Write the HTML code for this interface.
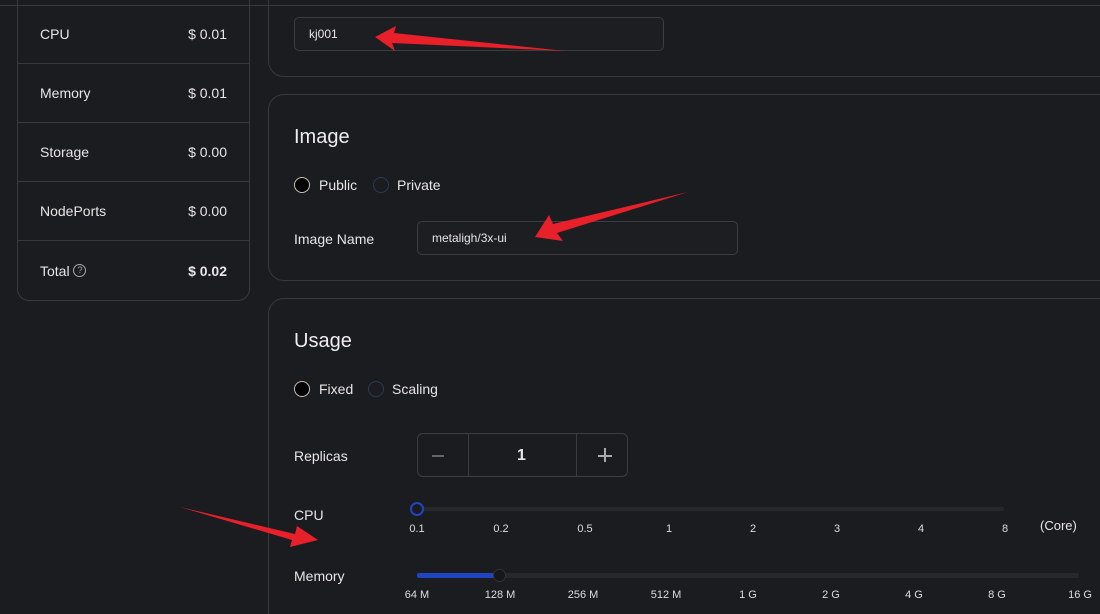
<!DOCTYPE html><html><head><style>
*{box-sizing:border-box;margin:0;padding:0}
html,body{width:1100px;height:614px;overflow:hidden}
body{background:#1b1c1f;font-family:"Liberation Sans",sans-serif;color:#e6e6e6;position:relative;font-size:14px}
.a{position:absolute}
.topline{left:0;top:5px;width:1100px;height:1px;background:#36393d}
.left{left:17px;top:-10px;width:233px;height:311px;border:1px solid #36393d;border-top:none;border-radius:0 0 12px 12px}
.row{position:absolute;left:0;width:231px;height:59px;border-bottom:1px solid #36393d;display:flex;justify-content:space-between;align-items:center;padding:0 22px;font-size:14px}
.card{left:268px;width:850px;border:1px solid #36393d;border-radius:16px}
.inp{border:1px solid #3a3d42;border-radius:5px;background:#1d1e21;font-size:12px;padding-left:14px;display:flex;align-items:center}
h2{position:absolute;font-size:20px;font-weight:normal;color:#eee}
.rad{position:absolute;width:16px;height:16px;border-radius:50%;border:1.5px solid #2b3a55}
.rad.on{border-color:#c9c1b3;background:#000}
.lbl{position:absolute;font-size:14px;white-space:nowrap}
.tick{position:absolute;font-size:11px;color:#ddd;transform:translateX(-50%);white-space:nowrap}
</style></head><body>
<div class="a topline"></div>
<div class="a left">
<div class="row" style="top:15px">CPU<span>$ 0.01</span></div>
<div class="row" style="top:74px">Memory<span>$ 0.01</span></div>
<div class="row" style="top:133px">Storage<span>$ 0.00</span></div>
<div class="row" style="top:192px">NodePorts<span>$ 0.00</span></div>
<div class="row" style="top:251px;border:none"><span style="display:flex;align-items:center">Total&nbsp;<span style="display:inline-block;width:13px;height:13px;border:1px solid #aaa;border-radius:50%;font-size:9px;text-align:center;line-height:11px;color:#aaa">?</span></span><b>$ 0.02</b></div>
</div>
<div class="a card" style="top:-20px;height:97px"></div>
<div class="a inp" style="left:294px;top:17px;width:370px;height:34px">kj001</div>
<div class="a card" style="top:94px;height:187px"></div>
<h2 style="left:294px;top:126px">Image</h2>
<div class="rad on" style="left:294px;top:177px"></div><div class="lbl" style="left:319px;top:177px">Public</div>
<div class="rad" style="left:373px;top:177px"></div><div class="lbl" style="left:397px;top:177px">Private</div>
<div class="lbl" style="left:294px;top:231px">Image Name</div>
<div class="a inp" style="left:417px;top:221px;width:321px;height:34px">metaligh/3x-ui</div>
<div class="a card" style="top:298px;height:340px"></div>
<h2 style="left:294px;top:330px">Usage</h2>
<div class="rad on" style="left:294px;top:381px"></div><div class="lbl" style="left:319px;top:381px">Fixed</div>
<div class="rad" style="left:368px;top:381px"></div><div class="lbl" style="left:392px;top:381px">Scaling</div>
<div class="lbl" style="left:294px;top:448px">Replicas</div>
<div class="a" style="left:417px;top:433px;width:211px;height:44px;border:1px solid #3a3d42;border-radius:6px"></div>
<div class="a" style="left:468px;top:433px;width:1px;height:44px;background:#3a3d42"></div>
<div class="a" style="left:576px;top:433px;width:1px;height:44px;background:#3a3d42"></div>
<div class="a" style="left:432px;top:455px;width:12px;height:1.5px;background:#666"></div>
<div class="lbl" style="left:517px;top:447px;font-size:16px;font-weight:bold">1</div>
<div class="a" style="left:598px;top:455px;width:14px;height:1.5px;background:#aaa"></div>
<div class="a" style="left:604px;top:448px;width:1.5px;height:14px;background:#aaa"></div>
<div class="lbl" style="left:294px;top:507px">CPU</div>
<div class="a" style="left:417px;top:507px;width:587px;height:4px;background:#26282b;border-radius:2px"></div>
<div class="a" style="left:410px;top:502px;width:14px;height:14px;border-radius:50%;border:2px solid #1f45c0;background:#1b1c1f"></div>
<div class="tick" style="left:417px;top:523px">0.1</div><div class="tick" style="left:501px;top:523px">0.2</div><div class="tick" style="left:585px;top:523px">0.5</div><div class="tick" style="left:669px;top:523px">1</div><div class="tick" style="left:753px;top:523px">2</div><div class="tick" style="left:837px;top:523px">3</div><div class="tick" style="left:921px;top:523px">4</div><div class="tick" style="left:1005px;top:523px">8</div>
<div class="lbl" style="left:1040px;top:518px;font-size:13px">(Core)</div>
<div class="lbl" style="left:294px;top:568px">Memory</div>
<div class="a" style="left:417px;top:573px;width:662px;height:5px;background:#26282b;border-radius:2px"></div>
<div class="a" style="left:417px;top:573px;width:82px;height:5px;background:#1f45c0;border-radius:2px"></div>
<div class="a" style="left:493px;top:569px;width:13px;height:13px;border-radius:50%;background:#16171a;border:1px solid #333"></div>
<div class="tick" style="left:417px;top:589px">64 M</div><div class="tick" style="left:500px;top:589px">128 M</div><div class="tick" style="left:583px;top:589px">256 M</div><div class="tick" style="left:666px;top:589px">512 M</div><div class="tick" style="left:748px;top:589px">1 G</div><div class="tick" style="left:831px;top:589px">2 G</div><div class="tick" style="left:914px;top:589px">4 G</div><div class="tick" style="left:997px;top:589px">8 G</div><div class="tick" style="left:1080px;top:589px">16 G</div>
<svg class="a" style="left:0;top:0" width="1100" height="614">
<polygon fill="#e8202a" points="375,37 396,26 394,33 565,51 392,43 395,51"/>
<polygon fill="#e8202a" points="535,237 549,215 553,224 688,192 557,233 563,241"/>
<polygon fill="#e8202a" points="318,540 297,526 295,534 180,507 292,540 290,547"/>
</svg>
</body></html>
